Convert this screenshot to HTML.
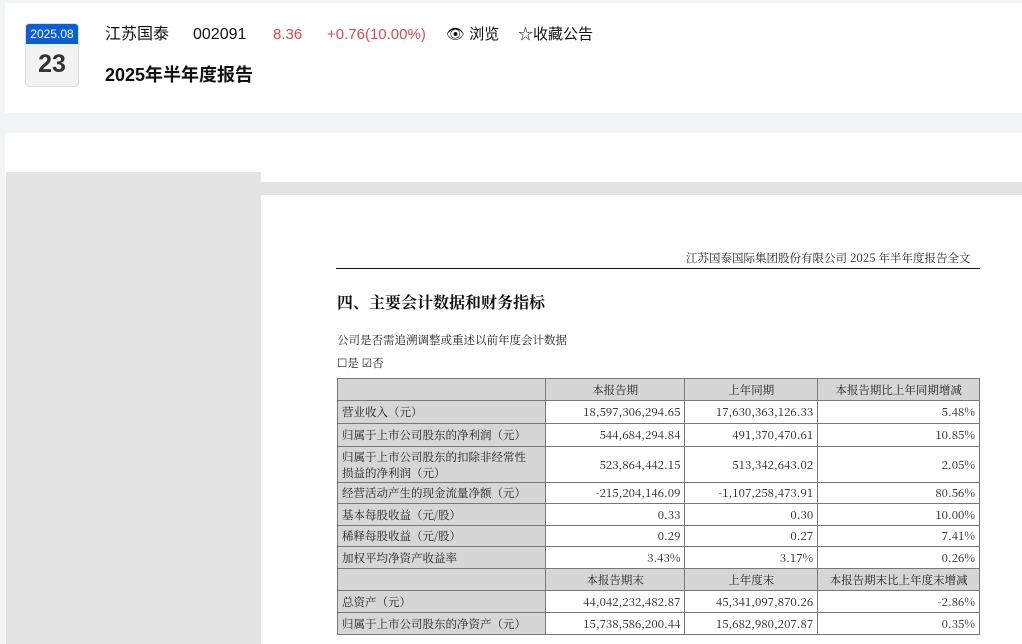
<!DOCTYPE html><html><head><meta charset="utf-8"><style>
*{margin:0;padding:0;box-sizing:border-box}
body{width:1022px;height:644px;background:#f3f4f6;position:relative;overflow:hidden;font-family:"Liberation Sans","Noto Sans CJK SC",sans-serif}
.a{position:absolute}
.card1{left:5px;top:3px;width:1017px;height:110px;background:#fff}
.cal{left:25px;top:23px;width:54px;height:64px;border:1px solid #ddd;border-radius:4px;background:#f2f2f2;overflow:hidden}
.cal .m{background:#0b5fd3;color:#fff;font-size:12px;text-align:center;height:20px;line-height:20px}
.cal .d{font-size:25px;font-weight:bold;color:#333;text-align:center;line-height:40px}
.t{top:24px;font-size:16px;line-height:22px;color:#111}
.r{color:#e04a4a}
.title{left:105px;top:61px;font-size:18px;font-weight:bold;color:#111}
.card2{left:5px;top:133px;width:1017px;height:511px;background:#fff}
.side{left:6px;top:172px;width:255px;height:472px;background:#e4e4e4}
.strip{left:261px;top:182px;width:761px;height:13px;background:#e4e4e4}
.s{font-family:"Noto Serif CJK SC","Liberation Serif",serif;color:#222}
table{position:absolute;left:337px;top:378px;width:643px;border-collapse:collapse;font-family:"Noto Serif CJK SC","Liberation Serif",serif;font-size:11.5px;color:#222}
td{border:1px solid #777;padding:0 4px;text-align:right;line-height:16px;white-space:nowrap}
td:first-child{text-align:left;background:#d6d6d6}
tr.h td{background:#d6d6d6;text-align:center}
</style></head><body>
<div class="a card1"></div>
<div class="a cal"><div class="m">2025.08</div><div class="d">23</div></div>
<div class="a t" style="left:105px">江苏国泰</div>
<div class="a t" style="left:193px">002091</div>
<div class="a t r" style="left:273px;font-size:15px">8.36</div>
<div class="a t r" style="left:327px;font-size:15px">+0.76(10.00%)</div>
<div class="a t" style="left:446px;font-size:15px">👁 浏览</div>
<div class="a t" style="left:518px;font-size:15px">☆收藏公告</div>
<div class="a title">2025年半年度报告</div>
<div class="a card2"></div>
<div class="a side"></div>
<div class="a strip"></div>
<div class="a s" style="left:686px;top:250px;font-size:11.5px;white-space:nowrap">江苏国泰国际集团股份有限公司 2025 年半年度报告全文</div>
<div class="a" style="left:336px;top:268px;width:644px;height:1px;background:#111"></div>
<div class="a s" style="left:337px;top:290px;font-size:16px;font-weight:bold;color:#111">四、主要会计数据和财务指标</div>
<div class="a s" style="left:337px;top:332px;font-size:11.5px">公司是否需追溯调整或重述以前年度会计数据</div>
<div class="a s" style="left:337px;top:355px;font-size:11.5px">☐是 ☑否</div>
<table>
<colgroup><col style="width:208px"><col style="width:140px"><col style="width:133px"><col style="width:162px"></colgroup>
<tr class="h" style="height:22px"><td></td><td>本报告期</td><td>上年同期</td><td>本报告期比上年同期增减</td></tr>
<tr style="height:23px"><td>营业收入（元）</td><td>18,597,306,294.65</td><td>17,630,363,126.33</td><td>5.48%</td></tr>
<tr style="height:23px"><td>归属于上市公司股东的净利润（元）</td><td>544,684,294.84</td><td>491,370,470.61</td><td>10.85%</td></tr>
<tr style="height:36px"><td>归属于上市公司股东的扣除非经常性<br>损益的净利润（元）</td><td>523,864,442.15</td><td>513,342,643.02</td><td>2.05%</td></tr>
<tr style="height:21px"><td>经营活动产生的现金流量净额（元）</td><td>-215,204,146.09</td><td>-1,107,258,473.91</td><td>80.56%</td></tr>
<tr style="height:22px"><td>基本每股收益（元/股）</td><td>0.33</td><td>0.30</td><td>10.00%</td></tr>
<tr style="height:21px"><td>稀释每股收益（元/股）</td><td>0.29</td><td>0.27</td><td>7.41%</td></tr>
<tr style="height:22px"><td>加权平均净资产收益率</td><td>3.43%</td><td>3.17%</td><td>0.26%</td></tr>
<tr class="h" style="height:22px"><td></td><td>本报告期末</td><td>上年度末</td><td>本报告期末比上年度末增减</td></tr>
<tr style="height:22px"><td>总资产（元）</td><td>44,042,232,482.87</td><td>45,341,097,870.26</td><td>-2.86%</td></tr>
<tr style="height:22px"><td>归属于上市公司股东的净资产（元）</td><td>15,738,586,200.44</td><td>15,682,980,207.87</td><td>0.35%</td></tr>
</table>
</body></html>
